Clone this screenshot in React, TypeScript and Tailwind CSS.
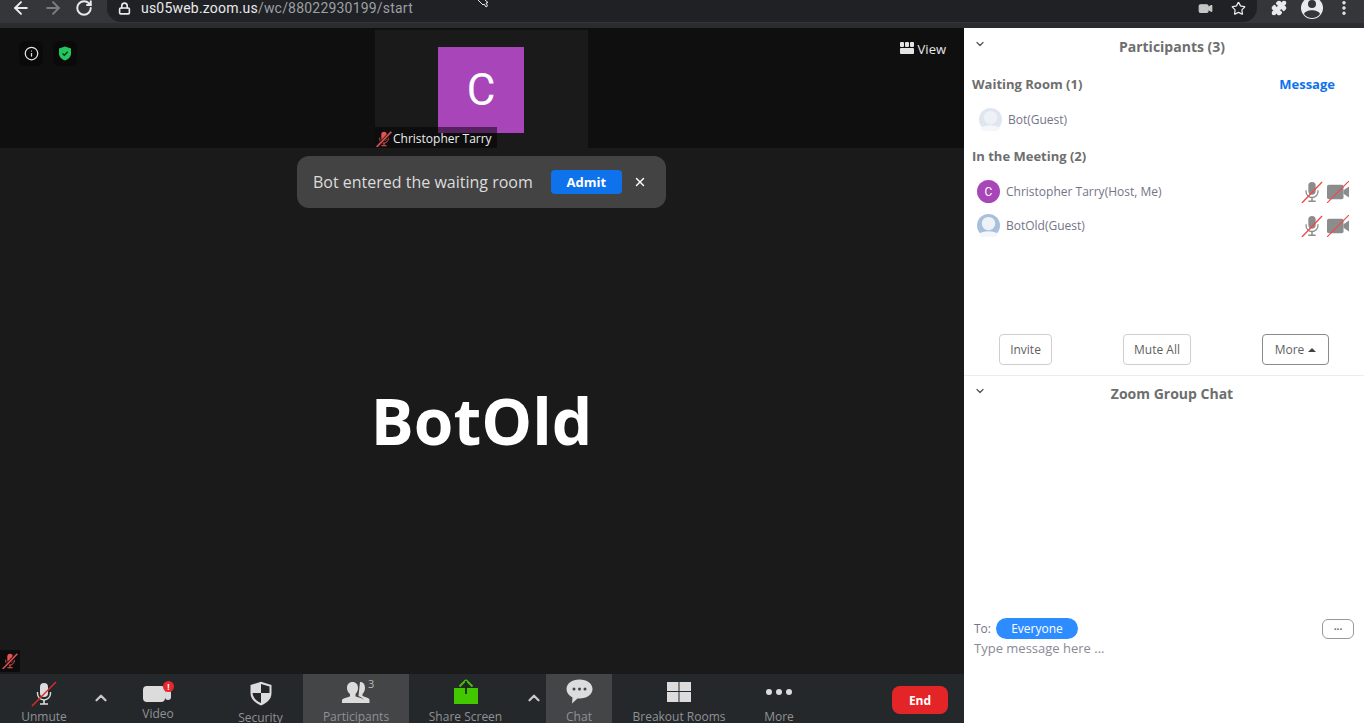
import React from 'react';
import { ArrowLeft, ArrowRight, RotateCw, Lock, Star, Puzzle, Video, EllipsisVertical, ChevronUp, ChevronDown, Info, X } from 'lucide-react';

const MicPath = ({ color }: { color: string }) => (
  <>
    <rect x="8" y="1" width="8" height="14" rx="4" fill={color} />
    <path d="M5.500 10v1.500a6.500 6.500 0 0 0 13 0V10" fill="none" stroke={color} strokeWidth="1.400" />
    <path d="M12 18v3.500M8 22h8" fill="none" stroke={color} strokeWidth="1.600" />
  </>
);

function MutedMic({ size, color, slash, gap }: { size: number; color: string; slash: string; gap?: string }) {
  return (
    <svg width={size} height={size} viewBox="0 0 24 24">
      <MicPath color={color} />
      {gap && <path d="M1 24 23 1" stroke={gap} strokeWidth="4.500" />}
      <path d="M1 24 23 1" stroke={slash} strokeWidth={gap ? 2.200 : 1.500} />
    </svg>
  );
}

function MutedCam() {
  return (
    <svg width="22" height="22" viewBox="0 0 24 24">
      <rect x="0" y="4" width="18" height="16" rx="2" fill="#8c8c8c" />
      <path d="M18 10 24 6v12l-6-4z" fill="#8c8c8c" />
      <path d="M0 24 24 0" stroke="#f0484a" strokeWidth="1.300" />
    </svg>
  );
}

function Avatar({ tone }: { tone: string }) {
  return (
    <svg width="23" height="23" viewBox="0 0 24 24" className="mb-[1px]">
      <circle cx="12" cy="12" r="12" fill={tone} />
      <circle cx="12" cy="10" r="7" fill="#eef2f7" />
      <path d="M2 21c4-4 16-4 20 0a12 12 0 0 1-20 0z" fill="#f3f6fa" />
    </svg>
  );
}

function ToolItem({ width, label, active, children, labelClass }: { width: string; label: string; active?: boolean; children: React.ReactNode; labelClass?: string }) {
  return (
    <div className={`${width} h-full shrink-0 flex flex-col items-center ${active ? 'bg-[#434547]' : ''}`}>
      <div className="h-[35px] shrink-0 w-full flex items-center justify-center">{children}</div>
      <span className={`text-xs leading-4 whitespace-nowrap text-[#8f9296] ${labelClass ?? ''}`}>{label}</span>
    </div>
  );
}

function Caret({ width }: { width: string }) {
  return (
    <div className={`${width} h-full shrink-0 flex justify-center pt-[15px]`}>
      <ChevronUp size={18} strokeWidth={3} className="text-[#c9c9c9]" />
    </div>
  );
}

function ParticipantRow({ name, avatar }: { name: string; avatar: React.ReactNode }) {
  return (
    <div className="h-[34px] flex items-center pl-[13px] pr-[15px]">
      {avatar}
      <span className="ml-[6px] text-xs text-[#747487]">{name}</span>
      <div className="ml-auto flex items-center gap-[4px]">
        <MutedMic size={22} color="#8c8c8c" slash="#f0484a" />
        <MutedCam />
      </div>
    </div>
  );
}

export default function App() {
  return (
    <div className="relative w-[1364px] h-[723px] overflow-hidden flex flex-col font-['Open_Sans',sans-serif]">
      {/* Browser bar */}
      <div className="h-[28px] shrink-0 bg-[#35363a] border-b-[5px] border-[#2b2c30] flex items-start">
        <div className="w-[107px] h-[22px] shrink-0 flex items-center pl-[11px] pb-[6px] gap-[12px] text-[#e8eaed]">
          <ArrowLeft size={20} strokeWidth={2.400} />
          <ArrowRight size={20} strokeWidth={2.400} className="text-[#7b7c7f]" />
          <RotateCw size={18} strokeWidth={2.600} />
        </div>
        <div className="w-[1150px] h-[22px] shrink-0 rounded-b-[14px] bg-[#202124] flex items-center pl-[11px] pr-[11px] pb-[6px]">
          <Lock size={13} strokeWidth={3} className="text-[#e8eaed]" />
          <span className="ml-[10px] text-sm font-['Roboto',sans-serif] tracking-[0.2px] text-[#e8eaed]">
            us05web.zoom.us<span className="text-[#9aa0a6]">/wc/88022930199/start</span>
          </span>
          <Video size={15} fill="#c4c7c5" className="ml-auto text-[#c4c7c5]" />
          <Star size={15} strokeWidth={2} className="ml-[18px] text-[#e8eaed]" />
        </div>
        <div className="flex-1 h-[22px] flex items-center pl-[14px] pb-[6px] text-[#e8eaed]">
          <Puzzle size={16} fill="#e8eaed" />
          <svg width="24" height="24" viewBox="0 0 24 24" className="ml-[13px]">
            <circle cx="12" cy="12" r="11" fill="#e8eaed" />
            <circle cx="12" cy="8" r="4" fill="#35363a" />
            <path d="M4 18c2-5 14-5 16 0a10 10 0 0 1-16 0z" fill="#35363a" />
          </svg>
          <EllipsisVertical size={18} strokeWidth={2.600} className="ml-[11px]" />
        </div>
      </div>

      <div className="flex-1 flex min-h-0">
        {/* Meeting area */}
        <div className="w-[964px] shrink-0 flex flex-col relative bg-[#1a1a1a]">
          <div className="h-[120px] shrink-0 bg-[#0f0f0f] relative flex justify-center">
            <div className="absolute left-[19px] top-[13px] flex gap-[10px]">
              <div className="w-[24px] h-[25px] rounded-md bg-[#0a0a0a] flex items-center justify-center">
                <Info size={15} className="text-[#e6e6e6]" />
              </div>
              <div className="w-[24px] h-[25px] rounded-md bg-[#0a0a0a] flex items-center justify-center">
                <svg width="14" height="15" viewBox="0 0 14 15">
                  <path d="M7 0.500 13 2.500V7.500C13 11 10 13.500 7 14.500 4 13.500 1 11 1 7.500V2.500z" fill="#22c55e" />
                  <path d="M4.500 7.500 6.300 9.300 9.700 5.700" fill="none" stroke="#0f2f1a" strokeWidth="1.300" />
                </svg>
              </div>
            </div>
            <div className="absolute right-[18px] top-[12px] flex items-center gap-[4px] text-[#e8e8e8] text-[13px]">
              <svg width="14" height="13" viewBox="0 0 14 13" fill="#e4e4e4" className="mb-[2px]">
                <rect x="0" y="0" width="4" height="5" rx="1" />
                <rect x="5" y="0" width="4" height="5" rx="1" />
                <rect x="10" y="0" width="4" height="5" rx="1" />
                <rect x="0" y="6" width="14" height="6" rx="1" />
              </svg>
              View
            </div>
            <div className="w-[213px] h-[118px] mt-[2px] mr-[1px] bg-[#1a1a1a] relative flex justify-center pt-[17px] pr-[1px]">
              <div className="w-[86px] h-[86px] bg-[#a845b8] flex items-center justify-center text-white text-[44px] font-['Roboto',sans-serif] font-normal">C</div>
              <div className="absolute left-0 bottom-0 w-[122px] h-[21px] bg-black/50 flex items-center pl-[1px] pt-[2px]">
                <MutedMic size={16} color="#e55353" slash="#e55353" gap="#2a1a1a" />
                <span className="ml-[1px] text-xs text-[#eeeeee] whitespace-nowrap">Christopher Tarry</span>
              </div>
            </div>
          </div>

          <div className="flex-1 flex items-center justify-center pt-5 min-h-0 relative">
            <span className="text-[64px] font-bold text-white leading-none mr-[1px]">BotOld</span>
            <div className="absolute left-0 bottom-[2px] w-[20px] h-[22px] bg-[#0c0c0c] flex items-center justify-center">
              <MutedMic size={16} color="#e55353" slash="#e55353" gap="#0c0c0c" />
            </div>
          </div>

          {/* Toast */}
          <div className="absolute left-[297px] top-[128px] w-[369px] h-[52px] rounded-xl bg-[#434343] flex items-center pl-4">
            <span className="text-base text-[#dcdcdc] whitespace-nowrap">Bot entered the waiting room</span>
            <button className="ml-[18px] w-[71px] h-[24px] rounded bg-[#0e72ed] text-white text-[13px] font-bold pt-[1px]">Admit</button>
            <X size={14} strokeWidth={2.400} className="ml-[11px] text-white" />
          </div>

          {/* Toolbar */}
          <div className="h-[49px] shrink-0 bg-[#25282b] flex items-stretch overflow-hidden">
            <ToolItem width="w-[88px]" label="Unmute" labelClass="text-[#8a8d91]">
              <svg width="26" height="26" viewBox="0 0 26 26" className="mt-[4px]">
                <g transform="translate(1 1)"><MicPath color="#dcdcdc" /></g>
                <path d="M1 25 25 1" stroke="#d92b2b" strokeWidth="1.500" />
              </svg>
            </ToolItem>
            <Caret width="w-[26px]" />
            <ToolItem width="w-[88px]" label="Video" labelClass="-mt-[3px]">
              <div className="relative w-[30px] h-[18px] mt-[3px]">
                <div className="absolute left-0 top-[2px] w-[22px] h-[16px] rounded-sm bg-[#dcdcdc]" />
                <div className="absolute left-[22px] top-[6px] w-[6px] h-[10px] bg-[#dcdcdc] rounded-sm" />
                <div className="absolute left-[20px] -top-[3px] w-[11px] h-[11px] rounded-full bg-[#e8262d] text-white text-[8px] leading-[11px] font-bold text-center">!</div>
              </div>
            </ToolItem>
            <ToolItem width="w-[101px] pl-4" label="Security" labelClass="mt-[1px]">
              <svg width="24" height="25" viewBox="0 0 22 25" className="mt-[4px]">
                <path d="M11 .8 21.500 4v8c0 6-4.500 10-10.500 12.500C5 22 .5 18 .5 12V4z" fill="#dcdcdc" />
                <path d="M11 3 19.500 5.500V12H11zM11 12H2.500C3 17 6.500 20 11 22z" fill="#25282b" />
              </svg>
            </ToolItem>
            <ToolItem width="w-[106px]" label="Participants" active>
              <div className="relative">
                <svg width="28" height="22" viewBox="0 0 28 22" fill="#dcdcdc">
                  <path d="M18 1c3 0 5 2 5 6 0 3-1.500 5-2.500 6v2c2 1 6 1.500 7 3.500V22h-6v-3.500c-1-2-3-2.500-5-3.500z" />
                  <path d="M10.500 1c3.500 0 5.500 2.500 5.500 6 0 3-1.500 5-2.500 6v2.500c3 1 7.500 1.500 8.500 3.500v3H0v-3c1-2 5.500-2.500 8-3.500V13C6.500 12 5 10 5 7c0-3.500 2-6 5.500-6z" />
                </svg>
                <span className="absolute left-[26px] -top-[5px] text-[11px] leading-4 text-[#b8b8b8]">3</span>
              </div>
            </ToolItem>
            <ToolItem width="w-[113px]" label="Share Screen">
              <svg width="24" height="26" viewBox="0 0 24 26">
                <rect x="0" y="9" width="24" height="16" fill="#43c700" />
                <path d="M12 1 5.500 7.500M12 1l6.500 6.500" stroke="#43c700" strokeWidth="1.800" fill="none" />
                <path d="M12 2v13" stroke="#1c2b12" strokeWidth="1.800" />
              </svg>
            </ToolItem>
            <Caret width="w-[24px]" />
            <ToolItem width="w-[66px]" label="Chat" active>
              <svg width="27" height="25" viewBox="0 0 27 25">
                <path d="M13.500 .5C21 .5 26.500 4.500 26.500 10S21 19.500 13.500 19.500h-2L6 24.500l.5-6C2.500 16.500.5 13.500.5 10 .5 4.500 6 .5 13.500.5z" fill="#dcdcdc" />
                <circle cx="8" cy="10" r="1.500" fill="#434547" />
                <circle cx="13.500" cy="10" r="1.500" fill="#434547" />
                <circle cx="19" cy="10" r="1.500" fill="#434547" />
              </svg>
            </ToolItem>
            <ToolItem width="w-[134px]" label="Breakout Rooms">
              <svg width="24" height="20" viewBox="0 0 24 20" fill="#dcdcdc">
                <rect x="0" y="0" width="11.500" height="9" />
                <rect x="12.500" y="0" width="11.500" height="9" />
                <rect x="0" y="10" width="11.500" height="10" />
                <rect x="12.500" y="10" width="11.500" height="10" />
              </svg>
            </ToolItem>
            <ToolItem width="w-[66px]" label="More">
              <svg width="28" height="8" viewBox="0 0 28 8" fill="#dcdcdc">
                <circle cx="4" cy="4" r="3" />
                <circle cx="14" cy="4" r="3" />
                <circle cx="24" cy="4" r="3" />
              </svg>
            </ToolItem>
            <div className="ml-auto mr-4 mt-[12px] w-[56px] h-[28px] rounded-lg bg-[#e42528] text-white text-xs font-bold flex items-center justify-center pt-[1px]">End</div>
          </div>
        </div>

        {/* Right panel */}
        <div className="flex-1 min-w-0 bg-white flex flex-col">
          <div className="h-[348px] shrink-0 flex flex-col border-b border-[#ededed]">
            <div className="h-[37px] shrink-0 relative flex items-center justify-center pl-4">
              <ChevronDown size={12} strokeWidth={2.500} className="absolute left-[10px] top-[10px] text-[#555]" />
              <span className="text-sm font-bold text-[#6e6e6e] mt-[1px]">Participants (3)</span>
            </div>
            <div className="h-[38px] shrink-0 flex items-center pl-2 pr-[29px] pt-[2px]">
              <span className="text-[13px] font-bold text-[#6e6e6e]">Waiting Room (1)</span>
              <span className="ml-auto text-[13px] font-bold text-[#0e72ed]">Message</span>
            </div>
            <div className="h-[34px] shrink-0 flex items-center pl-[15px]">
              <Avatar tone="#dfe6ef" />
              <span className="ml-[6px] text-xs text-[#747487]">Bot(Guest)</span>
            </div>
            <div className="h-[38px] shrink-0 flex items-center pl-2 pt-[2px]">
              <span className="text-[13px] font-bold text-[#6e6e6e]">In the Meeting (2)</span>
            </div>
            <ParticipantRow
              name="Christopher Tarry(Host, Me)"
              avatar={<div className="w-[23px] h-[23px] mb-[1px] rounded-full bg-[#a845b8] text-white text-xs flex items-center justify-center font-['Roboto',sans-serif]">C</div>}
            />
            <ParticipantRow name="BotOld(Guest)" avatar={<Avatar tone="#a9c0dc" />} />
            <div className="mt-auto h-[41px] flex items-start justify-between pl-[35px] pr-[35px]">
              <button className="w-[53px] h-[31px] border border-[#cfcfcf] rounded-sm text-xs text-[#5f5f5f]">Invite</button>
              <button className="w-[68px] h-[31px] border border-[#cfcfcf] rounded-sm text-xs text-[#5f5f5f]">Mute All</button>
              <button className="w-[67px] h-[31px] border border-[#8a8a8a] rounded-sm text-xs text-[#5f5f5f] flex items-center justify-center gap-[4px]">
                More
                <span className="w-0 h-0 border-x-[4px] border-x-transparent border-b-[4px] border-b-[#444]" />
              </button>
            </div>
          </div>

          <div className="flex-1 min-h-0 flex flex-col">
            <div className="h-[36px] shrink-0 relative flex items-center justify-center pl-4">
              <ChevronDown size={12} strokeWidth={2.500} className="absolute left-[10px] top-[9px] text-[#555]" />
              <span className="text-sm font-bold text-[#6e6e6e]">Zoom Group Chat</span>
            </div>
            <div className="flex-1" />
            <div className="h-[105px] shrink-0 flex flex-col pl-[10px] pr-[10px]">
              <div className="h-[21px] flex items-center">
                <span className="text-xs text-[#747487]">To:</span>
                <span className="ml-[5px] w-[82px] h-[21px] rounded-full bg-[#2d8cff] text-white text-xs flex items-center justify-center">Everyone</span>
                <span className="ml-auto w-[32px] h-[20px] rounded-md border border-[#999] flex items-center justify-center text-[10px] font-bold leading-none text-[#666]">···</span>
              </div>
              <span className="text-[13px] leading-5 mt-[-1px] text-[#8a8a96]">Type message here ...</span>
            </div>
          </div>
        </div>
      </div>

      {/* Mouse pointer caught in the capture */}
      <svg width="12" height="8" viewBox="0 0 12 8" className="absolute left-[477px] top-0">
        <path d="M1 0 6 5 7 4 9 7 10.500 6 9 3 11 2.500 8 0" fill="#202124" stroke="#e8eaed" strokeWidth="1" />
      </svg>
    </div>
  );
}
